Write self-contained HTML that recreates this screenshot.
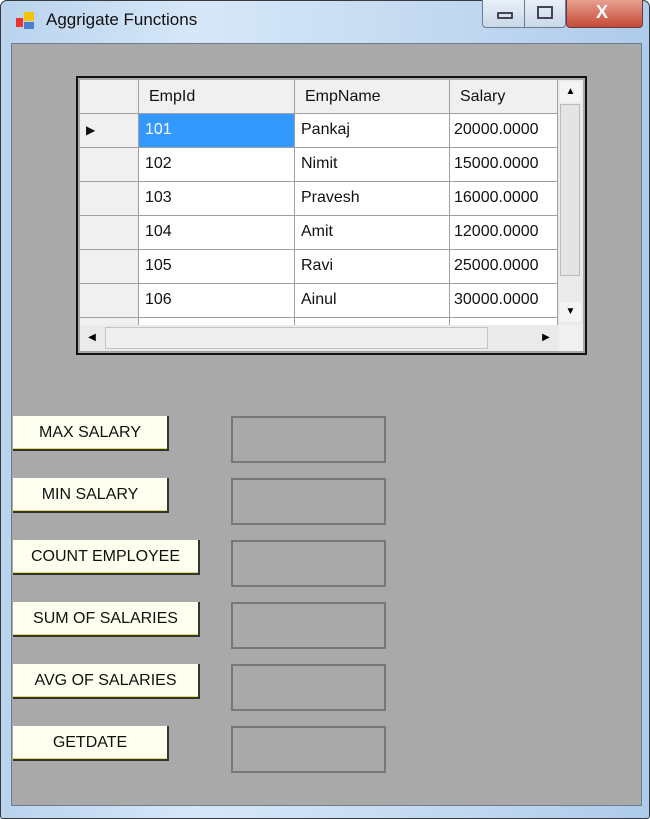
<!DOCTYPE html>
<html><head><style>
*{margin:0;padding:0;box-sizing:border-box}
body{width:650px;height:819px;background:#fff;font-family:"Liberation Sans",sans-serif;position:relative;overflow:hidden}
.win{position:absolute;left:0;top:0;width:650px;height:819px;box-shadow:inset 0 0 0 1px #3a3a3a;border-radius:7px 7px 3px 3px;background:linear-gradient(90deg,#b9d3ee 0%,#d6e7f8 30%,#c7dcf2 60%,#aecbeb 100%)}
.title{position:absolute;left:46px;top:10px;font-size:17px;color:#111}
.client{position:absolute;left:11px;top:43px;width:631px;height:763px;background:#a9a9a9;border:1px solid #6d7d8d}
.abs{position:absolute}
.grid{position:absolute;left:76px;top:76px;width:511px;height:279px;border:2px solid #111;background:#a9a9a9}
.cell{position:absolute;background:#fff;border-right:1px solid #a0a0a0;border-bottom:1px solid #a0a0a0;font-size:16px;padding:7px 0 0 6px;color:#111}
.hdr{position:absolute;background:#f0f0f0;border-right:1px solid #a0a0a0;border-bottom:1px solid #a0a0a0;font-size:16px;padding:8px 0 0 10px;color:#111}
.btn{position:absolute;left:13px;height:35px;background:#fffff0;border-right:2px solid #333;border-bottom:2px solid #333;box-shadow:inset 0 -1px 0 #e0e060;font-size:16px;text-align:center;line-height:33px;color:#111}
.tb{position:absolute;left:231px;width:155px;height:47px;border:2px solid #777}
</style></head><body>
<div class="win">
<svg class="abs" style="left:16px;top:11px" width="20" height="20"><rect x="0" y="7" width="7" height="9" fill="#e33"/><rect x="8" y="1" width="10" height="9" fill="#f5c400"/><rect x="8" y="11" width="10" height="7" fill="#4a7fd0"/></svg>
<div class="title">Aggrigate Functions</div>
<div class="abs" style="left:482px;top:0;width:84px;height:28px;border:1px solid #6b7d92;border-top:none;border-radius:0 0 4px 4px;background:linear-gradient(#e8f0f8,#c9d8e8)"></div>
<div class="abs" style="left:524px;top:0;width:1px;height:28px;background:#6b7d92"></div>
<div class="abs" style="left:497px;top:12px;width:16px;height:7px;border:2px solid #445;border-radius:1px"></div>
<div class="abs" style="left:537px;top:6px;width:16px;height:13px;border:2px solid #445"></div>
<div class="abs" style="left:566px;top:0;width:77px;height:28px;border:1px solid #6b3a3a;border-top:none;border-radius:0 0 4px 4px;background:linear-gradient(#e8a090,#c44a36)"></div>
<div class="abs" style="left:596px;top:2px;font-size:18px;font-weight:bold;color:#fff">X</div>
<div class="client"></div>
<div class="grid">
 <div class="hdr" style="left:2px;top:2px;width:59px;height:34px"></div>
 <div class="hdr" style="left:61px;top:2px;width:156px;height:34px">EmpId</div>
 <div class="hdr" style="left:217px;top:2px;width:155px;height:34px">EmpName</div>
 <div class="hdr" style="left:372px;top:2px;width:108px;height:34px">Salary</div>
 <div id="rows"></div>
 <div class="abs" style="left:480px;top:2px;width:25px;height:245px;background:#eaeaea"></div>
 <div class="abs" style="left:482px;top:4px;width:21px;height:20px;background:#f4f4f4;font-size:10px;text-align:center;line-height:20px">▲</div>
 <div class="abs" style="left:482px;top:26px;width:20px;height:172px;background:#e4e4e4;border:1px solid #bbb"></div>
 <div class="abs" style="left:482px;top:224px;width:21px;height:20px;background:#f4f4f4;font-size:10px;text-align:center;line-height:20px">▼</div>
 <div class="abs" style="left:2px;top:247px;width:478px;height:26px;background:#eaeaea"></div>
 <div class="abs" style="left:4px;top:249px;width:20px;height:22px;font-size:10px;text-align:center;line-height:22px">◀</div>
 <div class="abs" style="left:27px;top:249px;width:383px;height:22px;background:#eeeeee;border:1px solid #c4c4c4"></div>
 <div class="abs" style="left:458px;top:249px;width:20px;height:22px;font-size:10px;text-align:center;line-height:22px">▶</div>
 <div class="abs" style="left:480px;top:247px;width:25px;height:26px;background:#f0f0f0"></div>
</div>
<div class="btn" style="top:416px;width:156px">MAX SALARY</div>
<div class="btn" style="top:478px;width:156px">MIN SALARY</div>
<div class="btn" style="top:540px;width:187px">COUNT EMPLOYEE</div>
<div class="btn" style="top:602px;width:187px">SUM OF SALARIES</div>
<div class="btn" style="top:664px;width:187px">AVG OF SALARIES</div>
<div class="btn" style="top:726px;width:156px">GETDATE</div>
<div class="tb" style="top:416px"></div>
<div class="tb" style="top:478px"></div>
<div class="tb" style="top:540px"></div>
<div class="tb" style="top:602px"></div>
<div class="tb" style="top:664px"></div>
<div class="tb" style="top:726px"></div>
</div>
<script>
var d=[["101","Pankaj","20000.0000"],["102","Nimit","15000.0000"],["103","Pravesh","16000.0000"],["104","Amit","12000.0000"],["105","Ravi","25000.0000"],["106","Ainul","30000.0000"],["","",""]];
var h="";d.forEach(function(r,i){var t=36+i*34;
h+='<div class="hdr" style="left:2px;top:'+t+'px;width:59px;height:34px;padding:0">'+(i==0?'<span style="position:absolute;left:6px;top:9px;font-size:12px">▶</span>':'')+'</div>';
h+='<div class="cell" style="left:61px;top:'+t+'px;width:156px;height:34px;'+(i==0?'background:#3399ff;color:#fff':'')+'">'+r[0]+'</div>';
h+='<div class="cell" style="left:217px;top:'+t+'px;width:155px;height:34px">'+r[1]+'</div>';
h+='<div class="cell" style="left:372px;top:'+t+'px;width:108px;height:34px;padding-left:4px">'+r[2]+'</div>';});
document.getElementById("rows").outerHTML=h;
</script>
</body></html>
